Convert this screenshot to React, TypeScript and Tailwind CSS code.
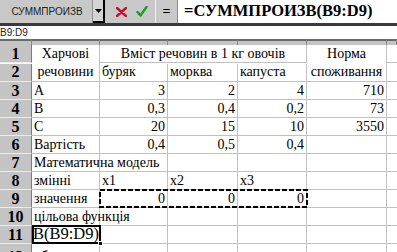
import React from "react";

const serif = { fontFamily: '"Liberation Serif", "Times New Roman", serif' };

type Cell = {
  text?: string;
  align?: "left" | "right" | "center";
};

const rows: Cell[][] = [
  // rows 3..10 (A..E)
  [{ text: "А" }, { text: "3", align: "right" }, { text: "2", align: "right" }, { text: "4", align: "right" }, { text: "710", align: "right" }],
  [{ text: "В" }, { text: "0,3", align: "right" }, { text: "0,4", align: "right" }, { text: "0,2", align: "right" }, { text: "73", align: "right" }],
  [{ text: "С" }, { text: "20", align: "right" }, { text: "15", align: "right" }, { text: "10", align: "right" }, { text: "3550", align: "right" }],
  [{ text: "Вартість" }, { text: "0,4", align: "right" }, { text: "0,5", align: "right" }, { text: "0,4", align: "right" }, {}],
  [{ text: "Математична модель" }, {}, {}, {}, {}],
  [{ text: "змінні" }, { text: "x1" }, { text: "x2" }, { text: "x3" }, {}],
  [{ text: "значення" }, { text: "0", align: "right" }, { text: "0", align: "right" }, { text: "0", align: "right" }, {}],
  [{ text: "цільова функція" }, {}, {}, {}, {}],
];

function RowNum({ n, low }: { n: number; low?: boolean }) {
  return (
    <div
      className={`h-[18px] bg-[#c4c4c4] border-r border-r-[#7a7a7a] border-b border-b-[#ececec] flex justify-center text-[16px] font-bold leading-none text-black ${
        low ? "items-start pt-[5px]" : "items-center"
      }`}
    >
      {n}
    </div>
  );
}

function GridCell({ cell, last, low }: { cell: Cell; last?: boolean; low?: boolean }) {
  const align =
    cell.align === "right" ? "justify-end pr-[2px]" : cell.align === "center" ? "justify-center" : "justify-start pl-[2px]";
  return (
    <div
      className={`h-[18px] border-b border-[#c0c0c0] flex whitespace-nowrap text-[14px] leading-none text-black ${align} ${
        last ? "" : "border-r"
      } ${low ? "items-start pt-[6px]" : "items-center"}`}
    >
      {cell.text}
    </div>
  );
}

function Marquee() {
  return (
    <svg className="absolute left-[-1px] top-[-1px] pointer-events-none" width="209" height="19">
      <rect x="1" y="1" width="207" height="17" fill="none" stroke="#000" strokeWidth="2" strokeDasharray="5 2" />
    </svg>
  );
}

export default function App() {
  return (
    <div className="w-[397px] h-[252px] overflow-hidden bg-white relative" style={serif}>
      {/* toolbar */}
      <div className="flex h-[26px] bg-[#c8c8c8] border-b-[3px] border-[#3a3a3a]">
        <div
          className="w-[93px] flex items-center justify-center pl-[2px] text-[10px] text-[#222] border-r border-[#909090]"
          style={{ fontFamily: '"Liberation Sans", Arial, sans-serif' }}
        >
          СУММПРОИЗВ
        </div>
        <div className="w-[12px] flex items-center justify-center bg-[#d4d4d4] border-r-2 border-b-2 border-black">
          <svg width="7" height="4" viewBox="0 0 7 4">
            <path d="M0 0h7L3.5 4z" fill="#000" />
          </svg>
        </div>
        <div className="w-[50px] flex items-center justify-around pl-[6px] pr-[2px]">
          <svg width="11" height="10" viewBox="0 0 11 10">
            <path d="M1 1l9 8M10 1L1 9" stroke="#c8102e" strokeWidth="2.4" strokeLinecap="round" />
          </svg>
          <svg width="12" height="11" viewBox="0 0 12 11">
            <path d="M1.5 6l3 3.5L10.5 1" stroke="#1f9a2e" strokeWidth="2.4" fill="none" strokeLinecap="round" strokeLinejoin="round" />
          </svg>
        </div>
        <div className="w-[23px] flex items-center justify-center border-l border-[#f0f0f0] border-r border-r-[#8a8a8a] text-[14px] font-bold leading-none">
          =
        </div>
        <div className="flex-1 bg-white flex items-center pl-[6px] text-[16.5px] font-bold leading-none whitespace-nowrap">
          =СУММПРОИЗВ(B9:D9)
        </div>
      </div>

      {/* name strip */}
      <div
        className="h-[13px] flex items-center text-[10px] text-[#222] leading-none"
        style={{ fontFamily: '"Liberation Sans", Arial, sans-serif' }}
      >
        B9:D9
      </div>

      {/* sheet */}
      <div className="grid grid-cols-[32px_68px_68px_70px_69px_80px_1fr]">
        {/* column header strip */}
        {[0, 1, 2, 3, 4, 5, 6].map((i) => (
          <div key={i} className="h-[6px] bg-[#c4c4c4] border-t-2 border-t-[#6a6a6a] border-r border-r-[#8a8a8a]" />
        ))}

        {/* row 1 */}
        <RowNum n={1} />
        <div className="row-span-2 border-r border-b border-[#c0c0c0] flex flex-col items-center text-[14px] leading-[18px]">
          <span>Харчові</span>
          <span>речовини</span>
        </div>
        <div className="col-span-3 h-[18px] border-r border-b border-[#c0c0c0] flex items-center justify-center text-[14px] leading-none whitespace-nowrap">
          Вміст речовин в 1 кг овочів
        </div>
        <div className="row-span-2 border-r border-b border-[#c0c0c0] flex flex-col items-center text-[14px] leading-[18px]">
          <span>Норма</span>
          <span>споживання</span>
        </div>
        <GridCell cell={{}} last />

        {/* row 2 */}
        <RowNum n={2} />
        <GridCell cell={{ text: "буряк" }} />
        <GridCell cell={{ text: "морква" }} />
        <GridCell cell={{ text: "капуста" }} />
        <GridCell cell={{}} last />

        {rows.map((r, i) => (
          <React.Fragment key={i}>
            <RowNum n={i + 3} />
            {r.map((c, j) =>
              i === 6 && j === 1 ? (
                <div key={j} className="relative">
                  <GridCell cell={c} />
                  <Marquee />
                </div>
              ) : (
                <GridCell key={j} cell={c} />
              )
            )}
            <GridCell cell={{}} last />
          </React.Fragment>
        ))}

        {/* row 11 */}
        <RowNum n={11} />
        <div className="relative h-[18px] border-b border-r border-[#c0c0c0]">
          <div className="absolute left-0 top-[-1px] w-[69px] h-[19px] border-2 border-black overflow-hidden flex items-center justify-end text-[16.5px] leading-none whitespace-nowrap">
            =СУММПРОИЗВ(B9:D9)
          </div>
          <div className="absolute left-[66px] top-[15px] w-[5px] h-[5px] bg-black border border-white" />
        </div>
        <GridCell cell={{}} />
        <GridCell cell={{}} />
        <GridCell cell={{}} />
        <GridCell cell={{}} />
        <GridCell cell={{}} last />

        {/* row 12 */}
        <RowNum n={12} low />
        <GridCell cell={{ text: "обмеження" }} low />
        <GridCell cell={{}} />
        <GridCell cell={{}} />
        <GridCell cell={{}} />
        <GridCell cell={{}} />
        <GridCell cell={{}} last />
      </div>
    </div>
  );
}
